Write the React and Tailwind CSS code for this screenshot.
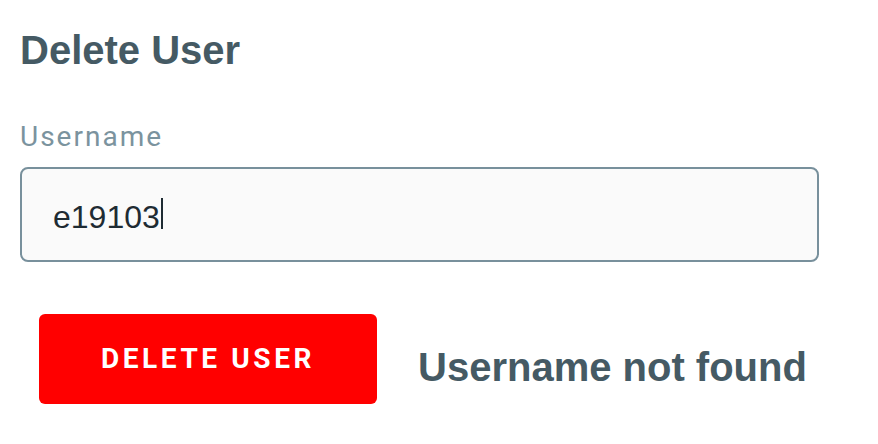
import React from 'react';

const sans = { fontFamily: '"Liberation Sans", Arial, sans-serif' };

export default function App() {
  return (
    <div className="min-h-screen bg-white pl-[20px] pt-[26px]" style={sans}>
      <h2 className="text-[40px] leading-[48px] font-bold text-[#455a64]">Delete User</h2>

      {/* username field */}
      <div className="mt-[47px]">
        <label className="block font-['Roboto',sans-serif] text-[28px] leading-[32px] tracking-[2px] text-[#7b939e]">
          Username
        </label>
        <div className="mt-[14px] w-[799px] h-[95px] rounded-[8px] border-2 border-[#78909c] bg-[#fafafa] pl-[31px] pt-[32px]">
          <div className="flex items-start text-[32px] leading-[32px] text-[#1e2b33]">
            <span>e19103</span>
            <span className="ml-[1px] -mt-[3px] w-[2px] h-[31px] bg-[#1e2b33]"></span>
          </div>
        </div>
      </div>

      {/* actions */}
      <div className="mt-[52px] flex items-start">
        <button className="ml-[19px] w-[338px] h-[90px] rounded-[6px] bg-[#ff0000] text-white font-['Roboto',sans-serif] font-bold text-[28px] tracking-[3.6px] uppercase">
          Delete User
        </button>
        <p className="ml-[41px] mt-[29px] text-[40px] leading-[48px] font-bold text-[#455a64]">
          Username not found
        </p>
      </div>
    </div>
  );
}
